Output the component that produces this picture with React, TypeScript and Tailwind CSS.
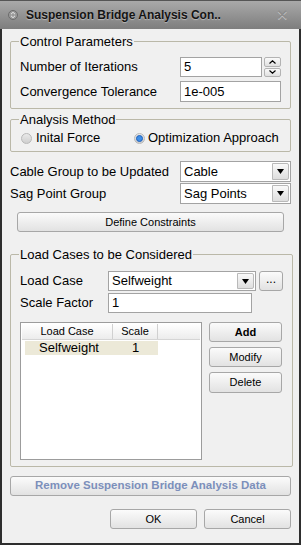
import { ReactNode } from 'react'

const font = { fontFamily: '"Liberation Sans", Arial, sans-serif' }

function Btn({ children, className = '' }: { children: ReactNode; className?: string }) {
  return (
    <button
      className={`flex items-center justify-center rounded-[3px] border border-[#a7a7a7] bg-gradient-to-b from-[#fbfbfb] to-[#e2e2e2] ${className}`}
    >
      {children}
    </button>
  )
}

function Select({ value, className = '' }: { value: string; className?: string }) {
  return (
    <div className={`flex h-full items-stretch border border-[#a3a3a3] bg-white ${className}`}>
      <div className="flex flex-1 items-center pl-[3px] text-[13px]">{value}</div>
      <div className="m-[1px] flex w-[17px] items-center justify-center rounded-r-[2px] border border-[#b9b9b9] bg-gradient-to-b from-[#f9f9f9] to-[#dedede]">
        <svg width="7" height="5" viewBox="0 0 7 5">
          <path d="M0 0h7L3.5 5z" fill="#000" />
        </svg>
      </div>
    </div>
  )
}

function Radio({ checked }: { checked?: boolean }) {
  return (
    <div className="flex h-[11px] w-[11px] items-center justify-center rounded-full border border-[#b8b8b8] bg-gradient-to-b from-[#e9e9e9] to-[#cfcfcf]">
      {checked && <div className="h-[7px] w-[7px] rounded-full border border-[#1f5fb8] bg-[#3d8ee8]" />}
    </div>
  )
}

function Group({ title, className = '', children }: { title: string; className?: string; children: ReactNode }) {
  return (
    <fieldset className={`rounded-[2px] border border-[#bab8a8] ${className}`}>
      <legend className="ml-[8px] px-[1px] text-[13px] leading-[15px]">{title}</legend>
      {children}
    </fieldset>
  )
}

export default function App() {
  return (
    <div style={font} className="flex h-[545px] w-[301px] flex-col border-x-2 border-b-2 border-[#2e2e2e] bg-[#f0f0f0] text-black">
      {/* title bar */}
      <div className="-mx-[2px] flex h-[29px] shrink-0 items-center border-t border-[#555] bg-gradient-to-b from-[#a9a9a9] to-[#7e7e7e] pl-[8px] pr-[12px]">
        <svg width="10" height="10" viewBox="0 0 10 10" className="mr-[8px]">
          <circle cx="5" cy="5" r="4.5" fill="#9a9a9a" stroke="#6c6c6c" />
          <path d="M3 4.2L5 2.3 7 4.2M3 5.8L5 7.7 7 5.8" fill="none" stroke="#e8e8e8" strokeWidth="1" />
        </svg>
        <span className="flex-1 text-[12px] font-bold text-[#141414] [text-shadow:0_1px_1px_rgba(255,255,255,0.4)]">
          Suspension Bridge Analysis Con..
        </span>
        <span className="text-[15px] text-[#8c8c8c] [text-shadow:0_1px_0_#c8c8c8]">✕</span>
      </div>

      <div className="flex flex-1 flex-col px-[8px]">
        <Group title="Control Parameters" className="mt-[5px] pb-[6px]">
          <div className="px-[9px]">
            <div className="mt-[8px] flex h-[20px] items-center">
              <span className="w-[160px] text-[13px]">Number of Iterations</span>
              <div className="flex h-full flex-1 gap-[2px]">
                <div className="flex flex-1 items-center border border-[#a3a3a3] bg-white pl-[3px] text-[13px]">5</div>
                <div className="flex w-[17px] flex-col gap-[1px]">
                  <div className="flex flex-1 items-center justify-center rounded-[2px] border border-[#b3b3b3] bg-gradient-to-b from-[#fafafa] to-[#e0e0e0]">
                    <svg width="7" height="4" viewBox="0 0 7 4"><path d="M0.5 3.5L3.5 0.8 6.5 3.5" fill="none" stroke="#000" strokeWidth="1.2" /></svg>
                  </div>
                  <div className="flex flex-1 items-center justify-center rounded-[2px] border border-[#b3b3b3] bg-gradient-to-b from-[#fafafa] to-[#e0e0e0]">
                    <svg width="7" height="4" viewBox="0 0 7 4"><path d="M0.5 0.5L3.5 3.2 6.5 0.5" fill="none" stroke="#000" strokeWidth="1.2" /></svg>
                  </div>
                </div>
              </div>
            </div>
            <div className="mt-[4px] flex h-[21px] items-center">
              <span className="w-[160px] text-[13px]">Convergence Tolerance</span>
              <div className="flex h-full flex-1 items-center border border-[#a3a3a3] bg-white pl-[3px] text-[13px]">1e-005</div>
            </div>
          </div>
        </Group>

        <Group title="Analysis Method" className="mt-[3px] pb-[4px]">
          <div className="mt-[2px] flex h-[18px] items-center px-[10px] text-[13px]">
            <div className="flex w-[113px] items-center gap-[4px]">
              <Radio />
              <span>Inital Force</span>
            </div>
            <div className="flex items-center gap-[3px]">
              <Radio checked />
              <span>Optimization Approach</span>
            </div>
          </div>
        </Group>

        <div className="mt-[9px] flex flex-col gap-[1px] text-[13px]">
          <div className="flex h-[21px] items-center">
            <span className="w-[170px]">Cable Group to be Updated</span>
            <Select value="Cable" className="flex-1" />
          </div>
          <div className="flex h-[21px] items-center">
            <span className="w-[170px]">Sag Point Group</span>
            <Select value="Sag Points" className="flex-1" />
          </div>
        </div>

        <Btn className="mx-[7px] mt-[8px] h-[20px] text-[11px]">Define Constraints</Btn>

        <Group title="Load Cases to be Considered" className="mt-[15px] pb-[6px]">
          <div className="px-[9px]">
            <div className="mt-[9px] flex h-[20px] items-center text-[13px]">
              <span className="w-[88px]">Load Case</span>
              <Select value="Selfweight" className="w-[148px]" />
              <Btn className="ml-[3px] h-[20px] w-[24px] pb-[4px] text-[12px]">...</Btn>
            </div>
            <div className="mt-[2px] flex h-[20px] items-center text-[13px]">
              <span className="w-[88px]">Scale Factor</span>
              <div className="flex h-full w-[144px] items-center border border-[#a3a3a3] bg-white pl-[3px]">1</div>
            </div>
            <div className="mt-[9px] flex gap-[7px]">
              <div className="h-[138px] w-[182px] border border-[#9c9c9c] bg-white p-[1px]">
                <div className="flex h-[16px] border-b border-[#d5d5d5] bg-gradient-to-b from-[#ffffff] to-[#ececec] text-[11px]">
                  <div className="flex w-[91px] items-center justify-center border-r border-[#d0d0d0]">Load Case</div>
                  <div className="flex w-[45px] items-center justify-center border-r border-[#d0d0d0]">Scale</div>
                  <div className="flex-1" />
                </div>
                <div className="ml-[3px] mt-[1px] flex h-[14px] w-[133px] items-center bg-[#ece9d8] text-[13px]">
                  <span className="w-[88px] text-center">Selfweight</span>
                  <span className="flex-1 text-center">1</span>
                </div>
              </div>
              <div className="flex w-[73px] flex-col gap-[5px] text-[11px]">
                <Btn className="h-[20px] font-bold">Add</Btn>
                <Btn className="h-[20px]">Modify</Btn>
                <Btn className="h-[21px]">Delete</Btn>
              </div>
            </div>
          </div>
        </Group>

        <Btn className="mt-[9px] h-[20px] text-[11.5px] font-bold text-[#7c8fbb]">Remove Suspension Bridge Analysis Data</Btn>

        <div className="mt-[13px] flex justify-end gap-[7px] text-[11px]">
          <Btn className="h-[20px] w-[87px]">OK</Btn>
          <Btn className="h-[20px] w-[87px]">Cancel</Btn>
        </div>
      </div>
    </div>
  )
}
